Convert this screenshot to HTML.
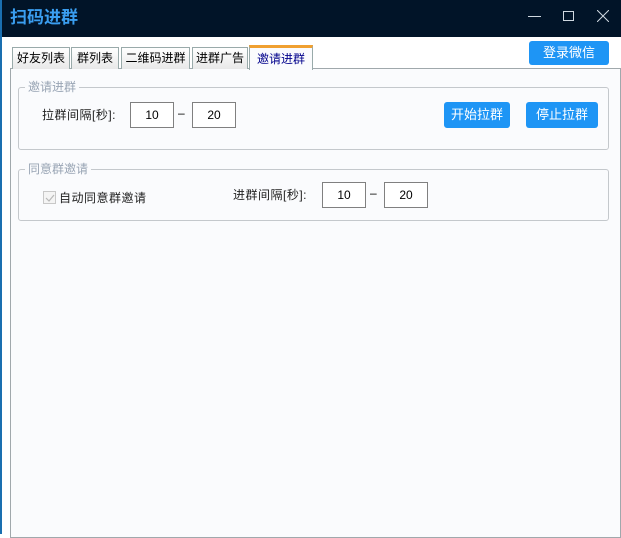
<!DOCTYPE html>
<html><head><meta charset="utf-8"><style>
*{margin:0;padding:0;box-sizing:border-box}
body{width:621px;height:534px;overflow:hidden;background:#fff;position:relative;font-family:"Liberation Sans","Noto Sans CJK SC",sans-serif;font-size:12px;color:#000}
.a{position:absolute}
.title{left:0;top:0;width:621px;height:37px;background:#011428}
.tab{position:absolute;top:47px;height:22px;border:1px solid #9aa;border-bottom:none;background:linear-gradient(#fff,#e8e8e8);font-size:12px;text-align:center;line-height:20px}
.panel{left:10px;top:68px;width:611px;height:470px;border:1px solid #a0a8ac;background:#fafbfd}
.grp{position:absolute;border:1px solid #c4c8cc;border-radius:3px}
.leg{position:absolute;top:-9px;left:6px;background:#fafbfd;color:#98a4b4;font-size:12px;padding:0 3px;line-height:16px}
.inp{position:absolute;width:44px;height:26px;border:1px solid #808080;background:#fff;text-align:center;line-height:24px;font-size:12px}
.btn{position:absolute;background:#1e95f5;color:#fff;border-radius:3px;text-align:center;font-size:13px}
.lbl{position:absolute;font-size:12px;line-height:18px;color:#222;letter-spacing:0.5px}
</style></head><body>
<div class="a title"></div>
<div class="a" style="left:0;top:0;width:2px;height:534px;background:#1a6fb0"></div>
<div class="a" style="left:10px;top:6px;color:#3a9ef0;font-size:17px;line-height:24px;font-weight:bold">扫码进群</div>
<div class="a" style="left:528px;top:16px;width:13px;height:1px;background:#cfd8e0"></div>
<div class="a" style="left:563px;top:11px;width:11px;height:10px;border:1px solid #cfd8e0"></div>
<svg class="a" style="left:597px;top:10px" width="12" height="12"><path d="M0 0L12 12M12 0L0 12" stroke="#cfd8e0" stroke-width="1"/></svg>
<div class="btn" style="left:529px;top:41px;width:80px;height:24px;line-height:24px">登录微信</div>
<div class="a panel"></div>
<div class="tab" style="left:12px;width:58px">好友列表</div>
<div class="tab" style="left:71px;width:48px">群列表</div>
<div class="tab" style="left:121px;width:69px">二维码进群</div>
<div class="tab" style="left:192px;width:56px">进群广告</div>
<div class="tab" style="left:249px;top:45px;height:25px;width:64px;background:#fafbfd;color:#00008b;border-top:3px solid #f0a030;line-height:22px">邀请进群</div>
<div class="grp" style="left:18px;top:87px;width:591px;height:63px"><div class="leg">邀请进群</div></div>
<div class="lbl" style="left:42px;top:106px">拉群间隔[秒]:</div>
<div class="inp" style="left:130px;top:102px">10</div>
<div class="a" style="left:178px;top:106px">–</div>
<div class="inp" style="left:192px;top:102px">20</div>
<div class="btn" style="left:444px;top:102px;width:66px;height:26px;line-height:26px">开始拉群</div>
<div class="btn" style="left:526px;top:102px;width:72px;height:26px;line-height:26px">停止拉群</div>
<div class="grp" style="left:18px;top:169px;width:591px;height:52px"><div class="leg">同意群邀请</div></div>
<div class="a" style="left:43px;top:191px;width:13px;height:13px;border:1px solid #c8c8c8;background:#f4f4f4"></div>
<svg class="a" style="left:44px;top:192px" width="12" height="12"><path d="M2 6L5 9L10 3" stroke="#b8b8b8" fill="none" stroke-width="1.2"/></svg>
<div class="lbl" style="left:59px;top:189px">自动同意群邀请</div>
<div class="lbl" style="left:233px;top:186px">进群间隔[秒]:</div>
<div class="inp" style="left:322px;top:182px">10</div>
<div class="a" style="left:370px;top:186px">–</div>
<div class="inp" style="left:384px;top:182px">20</div>
</body></html>
